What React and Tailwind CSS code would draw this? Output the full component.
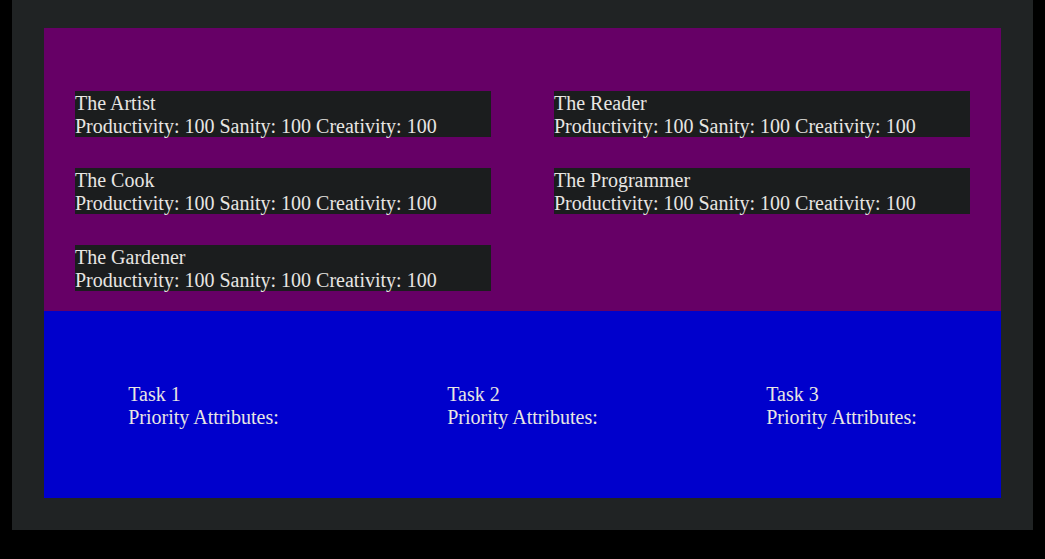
import React from "react";

const characters = [
  "The Artist",
  "The Reader",
  "The Cook",
  "The Programmer",
  "The Gardener",
];

const tasks = ["Task 1", "Task 2", "Task 3"];

const CharacterCard = ({ name }) => (
  <div className="bg-[#1b1d1e] h-[46px] pt-[1px] leading-[23px]">
    <div>{name}</div>
    <div>Productivity: 100 Sanity: 100 Creativity: 100</div>
  </div>
);

export default function App() {
  return (
    <div className="bg-black min-h-[559px] text-[#e8e6e3] text-[20px] font-['Liberation_Serif',serif]">
      <div className="ml-[12px] w-[1021px] h-[530px] bg-[#202324] px-[32px] pt-[28px]">
        <div className="bg-[#660066] h-[283px] pt-[63px] px-[31px]">
          <div className="grid grid-cols-2 gap-x-[63px] gap-y-[31px]">
            {characters.map((c) => (
              <CharacterCard key={c} name={c} />
            ))}
          </div>
        </div>
        <div className="bg-[#0000cc] h-[187px] grid grid-cols-3">
          {tasks.map((t) => (
            <div key={t} className="flex items-center justify-center pt-[2px]">
              <div className="leading-[23px]">
                <div>{t}</div>
                <div>Priority Attributes:</div>
              </div>
            </div>
          ))}
        </div>
      </div>
    </div>
  );
}
